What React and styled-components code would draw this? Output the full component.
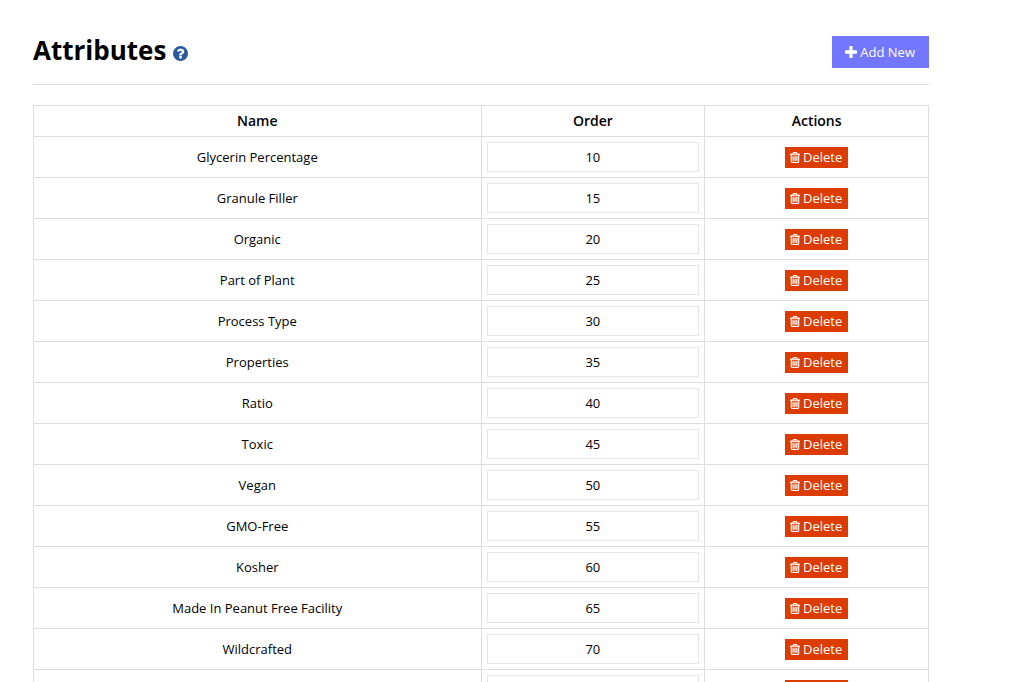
import React, { useState } from 'react'
import styled, { createGlobalStyle } from 'styled-components';

const initialAttributes = [
  { name: 'Glycerin Percentage', order: 10 },
  { name: 'Granule Filler', order: 15 },
  { name: 'Organic', order: 20 },
  { name: 'Part of Plant', order: 25 },
  { name: 'Process Type', order: 30 },
  { name: 'Properties', order: 35 },
  { name: 'Ratio', order: 40 },
  { name: 'Toxic', order: 45 },
  { name: 'Vegan', order: 50 },
  { name: 'GMO-Free', order: 55 },
  { name: 'Kosher', order: 60 },
  { name: 'Made In Peanut Free Facility', order: 65 },
  { name: 'Wildcrafted', order: 70 },
  { name: '', order: '' },
];

function HelpIcon() {
  return (
    <svg width="15" height="15" viewBox="128 128 1536 1536" fill="currentColor" aria-hidden="true">
      <path d="M1024 1376v-192q0-14-9-23t-23-9h-192q-14 0-23 9t-9 23v192q0 14 9 23t23 9h192q14 0 23-9t9-23zm256-672q0-88-55.5-163t-138.5-116-170-41q-243 0-371 213-15 24 8 42l132 100q7 6 19 6 16 0 25-12 53-68 86-92 34-24 86-24 48 0 85.5 26t37.5 59q0 38-20 61t-68 45q-63 28-115.5 86.5t-52.5 125.5v36q0 14 9 23t23 9h192q14 0 23-9t9-23q0-19 21.5-49.5t54.5-49.5q32-18 49-28.5t46-35 44.5-48 28-60.5 12.5-81zm384 192q0 209-103 385.5t-279.5 279.5-385.5 103-385.5-103-279.5-279.5-103-385.5 103-385.5 279.5-279.5 385.5-103 385.5 103 279.5 279.5 103 385.5z" />
    </svg>
  )
}

function PlusIcon() {
  return (
    <svg width="12" height="12" viewBox="192 128 1408 1408" fill="currentColor" aria-hidden="true">
      <path d="M1600 736v192q0 40-28 68t-68 28h-416v416q0 40-28 68t-68 28h-192q-40 0-68-28t-28-68v-416h-416q-40 0-68-28t-28-68v-192q0-40 28-68t68-28h416v-416q0-40 28-68t68-28h192q40 0 68 28t28 68v416h416q40 0 68 28t28 68z" />
    </svg>
  )
}

function TrashIcon() {
  return (
    <svg width="10" height="11" viewBox="192 128 1408 1536" fill="currentColor" stroke="currentColor" strokeWidth="50" aria-hidden="true">
      <path d="M704 736v576q0 14-9 23t-23 9h-64q-14 0-23-9t-9-23v-576q0-14 9-23t23-9h64q14 0 23 9t9 23zm256 0v576q0 14-9 23t-23 9h-64q-14 0-23-9t-9-23v-576q0-14 9-23t23-9h64q14 0 23 9t9 23zm256 0v576q0 14-9 23t-23 9h-64q-14 0-23-9t-9-23v-576q0-14 9-23t23-9h64q14 0 23 9t9 23zm128 724v-948h-896v948q0 22 7 40.5t14.5 27 10.5 8.5h832q3 0 10.5-8.5t14.5-27 7-40.5zm-672-1076h448l-48-117q-7-9-17-11h-317q-10 2-17 11zm928 32v64q0 14-9 23t-23 9h-96v948q0 83-47 143.5t-113 60.5h-832q-66 0-113-58.5t-47-141.5v-952h-96q-14 0-23-9t-9-23v-64q0-14 9-23t23-9h309l70-167q15-37 54-63t79-26h320q40 0 79 26t54 63l70 167h309q14 0 23 9t9 23z" />
    </svg>
  )
}

function App() {
  const [attributes, setAttributes] = useState(initialAttributes);

  const changeOrder = (index, order) => {
    setAttributes(attributes.map((item, i) => (i === index ? { ...item, order } : item)));
  }
  const removeAttribute = (index) => {
    setAttributes(attributes.filter((item, i) => i !== index));
  }

  return (
    <>
      <GlobalStyle />
      <Page>
        <Header>
          <TitleGroup>
            <Title>Attributes</Title>
            <HelpButton type="button" aria-label="Help"><HelpIcon /></HelpButton>
          </TitleGroup>
          <AddButton type="button"><PlusIcon />Add New</AddButton>
        </Header>
        <Table>
          <thead>
            <tr>
              <HeadCell $width="50%">Name</HeadCell>
              <HeadCell $width="25%">Order</HeadCell>
              <HeadCell $width="25%">Actions</HeadCell>
            </tr>
          </thead>
          <tbody>
            {attributes.map((item, index) => (
              <tr key={index}>
                <Cell>{item.name}</Cell>
                <Cell>
                  <OrderInput
                    type="text"
                    aria-label={`Order ${item.name}`}
                    value={item.order}
                    onChange={(e) => changeOrder(index, e.target.value)}
                  />
                </Cell>
                <Cell>
                  <DeleteButton type="button" onClick={() => removeAttribute(index)}>
                    <TrashIcon />Delete
                  </DeleteButton>
                </Cell>
              </tr>
            ))}
          </tbody>
        </Table>
      </Page>
    </>
  )
}

const GlobalStyle = createGlobalStyle`
  * {
    box-sizing: border-box;
  }
  html {
    height: 100%;
    overflow: hidden;
  }
  body {
    margin: 0;
    height: 100%;
    overflow-y: auto;
    scrollbar-width: none;
    background: #fff;
    color: #000;
    font-family: "Open Sans", sans-serif;
    font-size: 13px;
    line-height: 20px;
  }
  button, input {
    font: inherit;
  }
`;

const Page = styled.main`
  padding: 36px 87px 36px 33px;
`;

const Header = styled.header`
  display: flex;
  justify-content: space-between;
  align-items: flex-start;
  padding-bottom: 16px;
  margin-bottom: 20px;
  border-bottom: 1px solid #ddd;
`;

const TitleGroup = styled.div`
  display: flex;
  align-items: center;
  gap: 7px;
`;

const Title = styled.h1`
  margin: 0;
  font-size: 26px;
  font-weight: 700;
  line-height: 28px;
`;

const HelpButton = styled.button`
  display: flex;
  padding: 7px 0 0;
  border: 0;
  background: none;
  color: #2a5a9c;
  cursor: pointer;
`;

const AddButton = styled.button`
  display: flex;
  align-items: center;
  gap: 3px;
  padding: 6px 14px 6px 13px;
  border: 0;
  background: #7377ff;
  color: #fff;
  cursor: pointer;
`;

const Table = styled.table`
  width: 100%;
  border-collapse: collapse;
  text-align: center;
`;

const HeadCell = styled.th`
  width: ${props => props.$width};
  padding: 5px;
  border: 1px solid #ddd;
  font-size: 14px;
  font-weight: 600;
`;

const Cell = styled.td`
  padding: 5px;
  border: 1px solid #ddd;
  vertical-align: middle;
`;

const OrderInput = styled.input`
  display: block;
  width: 100%;
  height: 30px;
  padding: 4px 6px;
  border: 1px solid #e5e5e5;
  background: #fff;
  color: #000;
  text-align: center;
`;

const DeleteButton = styled.button`
  display: inline-flex;
  align-items: center;
  gap: 3px;
  height: 21px;
  padding: 0 6px 1px 5px;
  border: 0;
  background: #dc3c00;
  color: #fff;
  vertical-align: middle;
  cursor: pointer;
`;

export default App
